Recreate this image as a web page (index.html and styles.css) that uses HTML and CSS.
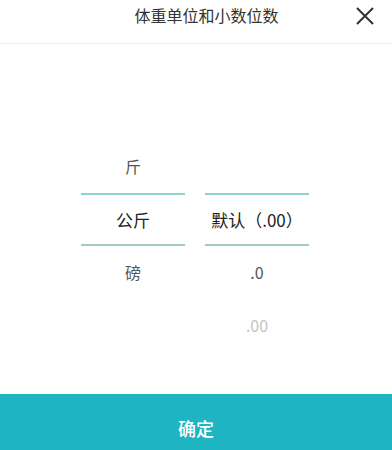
FILE: index.html
```html
<!DOCTYPE html>
<html>
<head>
<meta charset="utf-8">
<link rel="stylesheet" href="styles.css">
</head>
<body>
<div class="sheet">
  <div class="header">
    <div class="title">体重单位和小数位数</div>
    <svg class="close" width="20" height="20" viewBox="0 0 20 20"><path d="M2 2 L18 18 M18 2 L2 18" stroke="#333" stroke-width="2" fill="none"/></svg>
  </div>
  <div class="body">
    <div class="wheels">
      <div class="col">
        <div class="item"></div>
        <div class="item">斤</div>
        <div class="item sel">公斤</div>
        <div class="item">磅</div>
        <div class="item"></div>
      </div>
      <div class="col">
        <div class="item"></div>
        <div class="item"></div>
        <div class="item sel">默认（.00）</div>
        <div class="item">.0</div>
        <div class="item far">.00</div>
      </div>
    </div>
  </div>
  <div class="btn">确定</div>
</div>
</body>
</html>
```
FILE: styles.css
```css
html, body { margin: 0; padding: 0; background: #fff; }
body { font-family: "Noto Sans CJK SC", "Noto Sans", sans-serif; }
.sheet { width: 392px; height: 450px; display: flex; flex-direction: column; }
.header { height: 43px; border-bottom: 1px solid #f0f0f0; position: relative; display: flex; align-items: center; justify-content: center; }
.title { font-size: 16px; color: #333; margin-left: 21px; margin-top: -13px; }
.close { position: absolute; left: 355px; top: 6px; }
.body { flex: 1; display: flex; align-items: center; justify-content: center; }
.wheels { display: flex; gap: 20px; margin-left: -2px; }
.col { width: 104px; display: flex; flex-direction: column; }
.item { height: 53px; display: flex; align-items: center; justify-content: center; font-size: 16px; color: #555; }
.item.sel { color: #222; font-size: 17px; border-top: 2px solid #8ed3cb; border-bottom: 2px solid #a3c9c5; box-sizing: border-box; }
.item.far { color: #c4c4c4; }
.btn { height: 56px; background: #1fb4c1; color: #fff; font-size: 18px; font-weight: 500; display: flex; align-items: center; justify-content: center; padding-top: 12px; box-sizing: border-box; }
```
